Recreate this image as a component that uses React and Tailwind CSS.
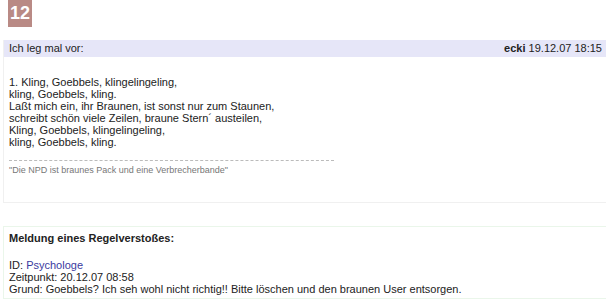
export default function App() {
  const lines = [
    '1. Kling, Goebbels, klingelingeling,',
    'kling, Goebbels, kling.',
    'Laßt mich ein, ihr Braunen, ist sonst nur zum Staunen,',
    'schreibt schön viele Zeilen, braune Stern´ austeilen,',
    'Kling, Goebbels, klingelingeling,',
    'kling, Goebbels, kling.',
  ];

  return (
    <div className="w-[606px] h-[302px] bg-white overflow-hidden font-['Liberation_Sans',Arial,sans-serif] text-[11px] text-[#222]">
      <div className="pl-[8px]">
        <div className="w-[24px] h-[27px] bg-[#b98a85] text-white font-bold text-[18px] flex items-center justify-center">
          12
        </div>
      </div>

      <div className="mt-[13px] ml-[3px] border-l border-b border-[#f0f0f0]">
        <div className="h-[17px] bg-[#e6e6f8] flex items-center justify-between pl-[5px] pr-[4px]">
          <span>Ich leg mal vor:</span>
          <span>
            <b>ecki</b> 19.12.07 18:15
          </span>
        </div>
        <div className="pl-[5px] pt-[19px] pb-[24px]">
          <div className="leading-[12px]">
            {lines.map((l) => (
              <div key={l}>{l}</div>
            ))}
          </div>
          <div className="mt-[12px] w-[325px] border-t border-dashed border-[#bbb]" />
          <div className="mt-[3px] text-[9px] text-[#777]">
            "Die NPD ist braunes Pack und eine Verbrecherbande"
          </div>
        </div>
      </div>

      <div className="mt-[23px] ml-[3px] border border-r-0 border-[#eaf6ea] pl-[5px] pt-[5px] pb-[3px] leading-[12px]">
        <div className="font-bold">Meldung eines Regelverstoßes:</div>
        <div className="mt-[15px]">
          ID: <span className="text-[#3a3aa0]">Psychologe</span>
        </div>
        <div>Zeitpunkt: 20.12.07 08:58</div>
        <div>Grund: Goebbels? Ich seh wohl nicht richtig!! Bitte löschen und den braunen User entsorgen.</div>
      </div>
    </div>
  );
}
